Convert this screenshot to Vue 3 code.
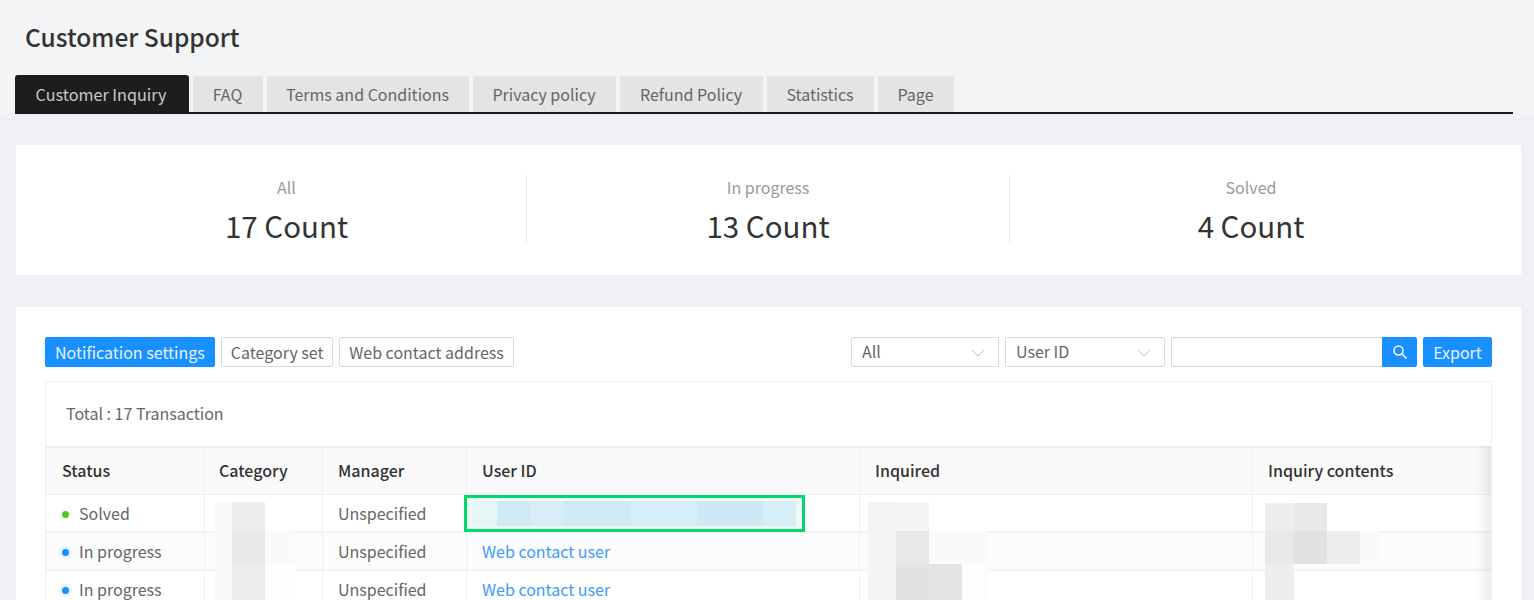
<script setup>
const tabs = [
  { label: 'Customer Inquiry', w: 174, active: true },
  { label: 'FAQ', w: 70 },
  { label: 'Terms and Conditions', w: 202 },
  { label: 'Privacy policy', w: 143 },
  { label: 'Refund Policy', w: 143 },
  { label: 'Statistics', w: 107 },
  { label: 'Page', w: 76 }
]
const stats = [
  { label: 'All', value: '17 Count' },
  { label: 'In progress', value: '13 Count' },
  { label: 'Solved', value: '4 Count' }
]
const rows = [
  { status: 'Solved', kind: 'solved', link: '' },
  { status: 'In progress', kind: 'progress', link: 'Web contact user' },
  { status: 'In progress', kind: 'progress', link: 'Web contact user' }
]
// Pixelated redaction blocks: [left, top, width, height, colour], relative to the table body
const blocks = [
  [169, 7, 17, 29, '#fafafa'], [186, 7, 33, 29, '#eeeeee'],
  [169, 36, 17, 33, '#fafafa'], [186, 36, 33, 33, '#e9e9e9'], [219, 36, 30, 33, '#fafafa'],
  [169, 69, 17, 36, '#fafafa'], [186, 69, 33, 36, '#eeeeee'], [219, 69, 30, 36, '#fdfdfd'],
  [822, 7, 28, 29, '#f3f3f3'], [850, 7, 33, 29, '#f5f5f5'],
  [822, 36, 28, 33, '#f5f5f5'], [850, 36, 33, 33, '#e8e8e8'], [883, 36, 59, 33, '#fafafa'],
  [822, 69, 28, 36, '#f5f5f5'], [850, 69, 33, 36, '#e2e2e2'], [883, 69, 33, 36, '#e4e4e4'], [916, 69, 26, 36, '#fdfdfd'],
  [1219, 8, 29, 28, '#eeeeee'], [1248, 8, 33, 28, '#e8e8e8'],
  [1219, 36, 29, 33, '#e9e9e9'], [1248, 36, 33, 33, '#e1e1e1'], [1281, 36, 33, 33, '#eeeeee'], [1314, 36, 19, 33, '#fafafa'],
  [1219, 69, 29, 36, '#eeeeee']
]
const idStrips = [
  [25, '#e5f6f5'], [34, '#cfeaf5'], [33, '#d7eef6'], [32, '#cfe9f5'], [35, '#cfe9f5'],
  [66, '#d6eef7'], [66, '#cde9f5'], [33, '#d6eef6']
]
</script>

<template>
  <div class="page">
    <h1 class="title">Customer Support</h1>

    <nav class="tabs">
      <div
        v-for="t in tabs"
        :key="t.label"
        class="tab"
        :class="{ active: t.active }"
        :style="{ width: t.w + 'px' }"
      >{{ t.label }}</div>
    </nav>

    <section class="stats">
      <div v-for="s in stats" :key="s.label" class="stat">
        <div class="stat-label">{{ s.label }}</div>
        <div class="stat-value">{{ s.value }}</div>
      </div>
    </section>

    <section class="panel">
      <div class="toolbar">
        <div class="tool-left">
          <button class="btn primary">Notification settings</button>
          <button class="btn cat">Category set</button>
          <button class="btn web">Web contact address</button>
        </div>
        <div class="tool-right">
          <div class="select w-all">
            <span>All</span>
            <svg width="14" height="8" viewBox="0 0 14 8"><path d="M1 1l6 6 6-6" fill="none" stroke="#bfbfbf" stroke-width="1" /></svg>
          </div>
          <div class="select w-id">
            <span>User ID</span>
            <svg width="14" height="8" viewBox="0 0 14 8"><path d="M1 1l6 6 6-6" fill="none" stroke="#bfbfbf" stroke-width="1" /></svg>
          </div>
          <div class="search">
            <div class="search-input"></div>
            <div class="search-btn">
              <svg width="16" height="16" viewBox="0 0 16 16">
                <circle cx="6.5" cy="6.5" r="4.5" fill="none" stroke="#fff" stroke-width="1.5" />
                <path d="M10 10l4.5 4.5" stroke="#fff" stroke-width="1.7" />
              </svg>
            </div>
          </div>
          <button class="btn primary export">Export</button>
        </div>
      </div>

      <div class="table">
        <div class="total">Total : 17 Transaction</div>
        <div class="grid head">
          <div class="cell">Status</div>
          <div class="cell">Category</div>
          <div class="cell">Manager</div>
          <div class="cell">User ID</div>
          <div class="cell">Inquired</div>
          <div class="cell">Inquiry contents</div>
        </div>
        <div class="body">
          <div v-for="(r, i) in rows" :key="i" class="grid row" :class="{ alt: i === 1 }">
            <div class="cell status">
              <i class="dot" :class="r.kind"></i>{{ r.status }}
            </div>
            <div class="cell"></div>
            <div class="cell">Unspecified</div>
            <div class="cell"><a class="link">{{ r.link }}</a></div>
            <div class="cell"></div>
            <div class="cell"></div>
          </div>
          <div
            v-for="(b, i) in blocks"
            :key="i"
            class="block"
            :style="{ left: b[0] + 'px', top: b[1] + 'px', width: b[2] + 'px', height: b[3] + 'px', background: b[4] }"
          ></div>
          <div class="highlight">
            <span v-for="(s, i) in idStrips" :key="i" :style="{ width: s[0] + 'px', background: s[1] }"></span>
          </div>
        </div>
        <div class="edge"></div>
      </div>
    </section>
  </div>
</template>

<style>
html, body { margin: 0; height: 600px; overflow: hidden; background: #f1f2f6; }
</style>

<style scoped>
.page {
  height: 600px;
  overflow: hidden;
  box-sizing: border-box;
  background: linear-gradient(to bottom, #f3f4f6 114px, #f0f1f5 114px);
  font-family: "Noto Sans CJK KR", "Noto Sans", sans-serif;
  color: #666;
}
.title {
  margin: 0 0 0 25px;
  padding-top: 18px;
  height: 75px;
  box-sizing: border-box;
  font-size: 24.5px;
  line-height: 37px;
  font-weight: 500;
  color: #333;
}
.tabs {
  display: flex;
  gap: 4px;
  margin: 0 21px 0 15px;
  height: 39px;
  box-sizing: border-box;
  border-bottom: 2px solid #1a1a1a;
}
.tab {
  margin-top: 1px;
  height: 36px;
  padding-right: 1px;
  background: #e4e4e4;
  color: #666;
  font-size: 16px;
  line-height: 36px;
  text-align: center;
  box-sizing: border-box;
}
.tab.active {
  margin-top: 0;
  height: 37px;
  padding-right: 2px;
  background: #1d1d1d;
  color: #c9c9c9;
  border-radius: 3px 3px 0 0;
  font-size: 16.2px;
  line-height: 38px;
}
.stats {
  display: grid;
  grid-template-columns: 479px 483px 1fr;
  margin: 31px 13px 0 16px;
  padding: 30px 29px 30px 31px;
  height: 130px;
  box-sizing: border-box;
  background: #fff;
}
.stat {
  height: 68px;
  text-align: center;
  border-left: 1px solid #ececec;
}
.stat:first-child { border-left: 0; }
.stat-label {
  font-size: 16px;
  line-height: 25px;
  color: #999;
}
.stat-value {
  font-size: 29.5px;
  line-height: 40px;
  margin-top: 5px;
  color: #333;
  font-weight: 400;
}
.panel {
  margin: 32px 13px 0 16px;
  padding: 30px 29px 0;
  height: 293px;
  box-sizing: border-box;
  background: #fff;
}
.toolbar {
  display: flex;
  justify-content: space-between;
  height: 30px;
}
.tool-left, .tool-right { display: flex; }
.tool-left { gap: 6px; }
.tool-right { gap: 6px; }
.btn {
  height: 30px;
  padding: 0 9px 1px;
  border: 1px solid #d9d9d9;
  border-radius: 2px;
  background: #fff;
  color: #666;
  font-family: inherit;
  font-size: 16px;
  line-height: 28px;
}
.btn.cat { padding-right: 8px; }
.btn.web { padding-right: 8px; padding-left: 9px; width: 175px; }
.btn.primary {
  border-color: #1890ff;
  background: #1890ff;
  color: #e6f3ff;
}
.select {
  display: flex;
  align-items: center;
  justify-content: space-between;
  height: 30px;
  padding: 0 13px 2px 10px;
  box-sizing: border-box;
  border: 1px solid #d9d9d9;
  border-radius: 2px;
  font-size: 16px;
  color: #666;
}
.select svg { margin-top: 3px; }
.w-all { width: 148px; }
.w-id { width: 160px; }
.search { display: flex; width: 246px; height: 30px; }
.search-input {
  flex: 1;
  box-sizing: border-box;
  border: 1px solid #d9d9d9;
  border-right: 0;
  border-radius: 2px 0 0 2px;
}
.search-btn {
  display: flex;
  align-items: center;
  justify-content: center;
  width: 35px;
  background: #1890ff;
  border-radius: 0 2px 2px 0;
}
.export { width: 69px; padding: 0 0 1px; }
.table {
  position: relative;
  margin-top: 14px;
  width: 1447px;
  height: 220px;
  overflow: hidden;
  box-sizing: border-box;
  border: 1px solid #f0f0f0;
  border-bottom: 0;
}
.total {
  height: 64px;
  padding-left: 20px;
  font-size: 16px;
  line-height: 63px;
  color: #666;
}
.grid {
  display: grid;
  grid-template-columns: 158px 118px 144px 393px 393px 1fr;
}
.cell {
  padding-left: 15px;
  border-left: 1px solid #f0f0f0;
  font-size: 16px;
  white-space: nowrap;
}
.cell:first-child { border-left: 0; padding-left: 16px; }
.head .cell:nth-child(2) { padding-left: 14px; }
.head .cell:last-child { padding-left: 15px; }
.head {
  height: 49px;
  box-sizing: border-box;
  background: #fafafa;
  border-top: 2px solid #f0f0f0;
  border-bottom: 1px solid #f0f0f0;
}
.head .cell {
  font-weight: 500;
  color: #333;
  line-height: 44px;
}
.body { position: relative; }
.row {
  height: 38px;
  box-sizing: border-box;
  border-bottom: 2px solid #f3f3f3;
  background: #fff;
}
.row.alt { background: #fcfcfc; }
.row .cell { line-height: 37px; color: #666; }
.status { display: flex; align-items: center; }
.dot {
  margin: 1px 10px 0 0;
  width: 7px;
  height: 7px;
  border-radius: 50%;
  flex: none;
}
.dot.solved { background: #52c41a; }
.dot.progress { background: #1890ff; box-shadow: 0 0 0 3px #e6f4ff; }
.link { color: #3d9bfb; }
.block { position: absolute; }
.highlight {
  position: absolute;
  left: 418px;
  top: 0;
  width: 341px;
  height: 37px;
  box-sizing: border-box;
  padding: 3px 4px 3px 5px;
  display: flex;
  border: 3px solid #03d86c;
  background: #eef9f6;
}
.highlight span { display: block; flex: none; }
.edge {
  position: absolute;
  right: 0;
  top: 64px;
  bottom: 0;
  width: 16px;
  background: linear-gradient(to right, rgba(0,0,0,0), rgba(0,0,0,.07));
}
</style>
